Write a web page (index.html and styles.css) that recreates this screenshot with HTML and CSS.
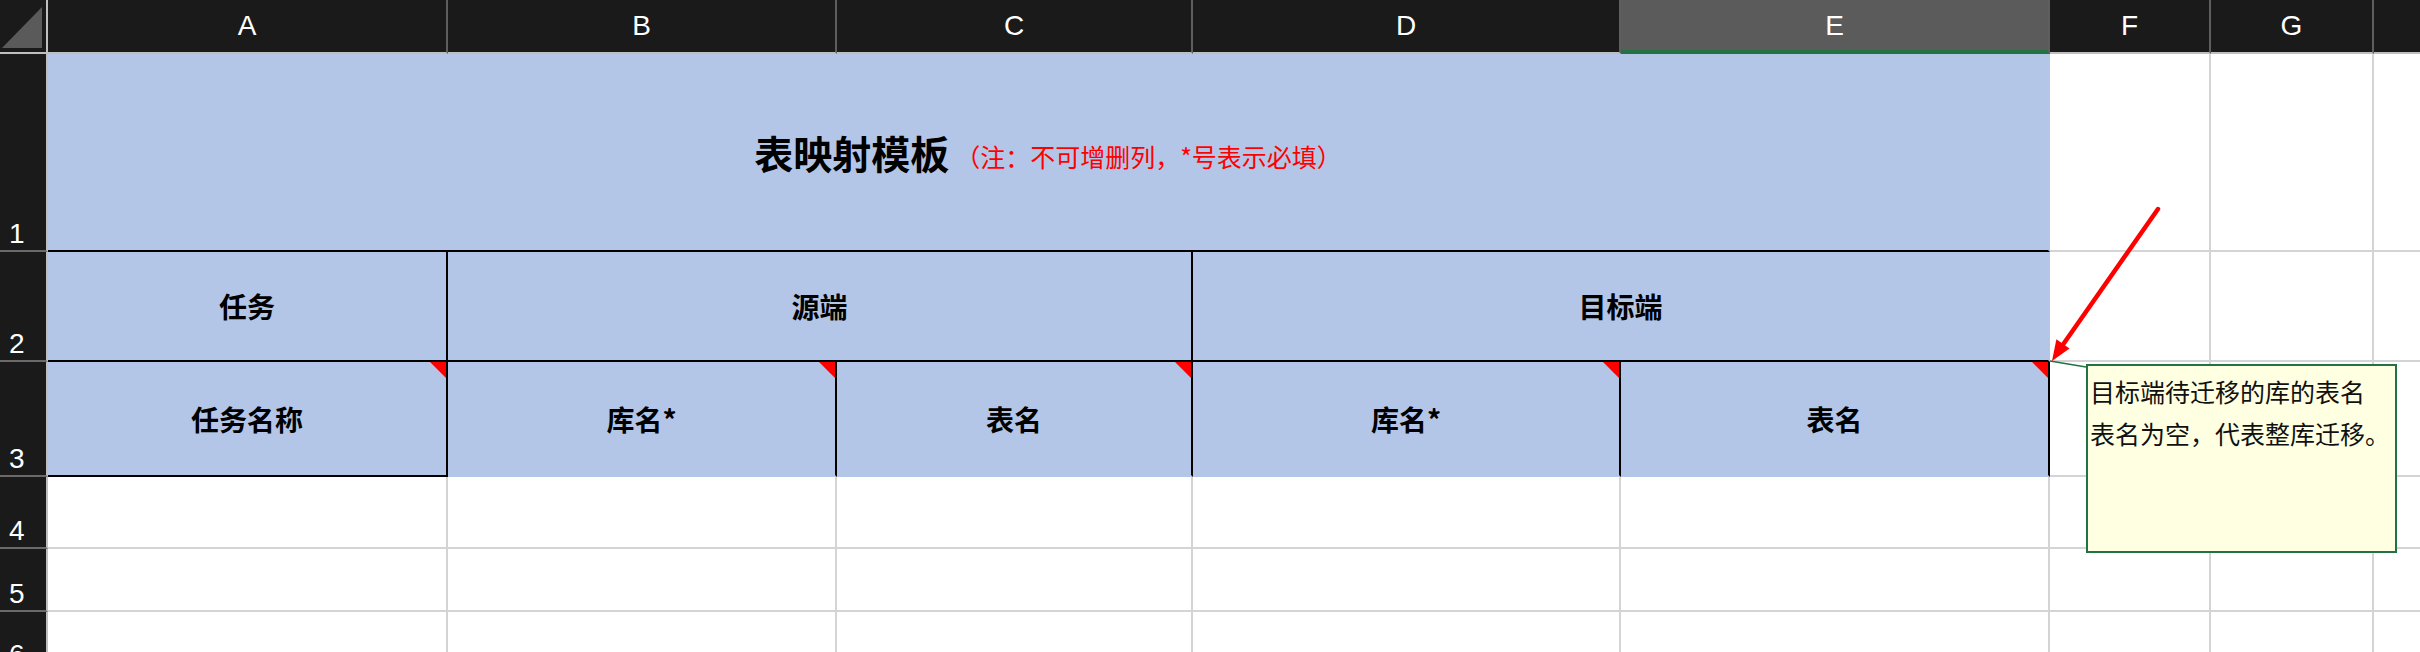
FILE: index.html
```html
<!DOCTYPE html>
<html lang="zh-CN">
<head>
<meta charset="utf-8">
<title>表映射模板</title>
<link rel="stylesheet" href="styles.css">
</head>
<body>
<div class="sheet">
  <div class="grid">
    <div class="corner"><svg class="corner-svg" width="46" height="52" viewBox="0 0 46 52"><polygon points="2,48 42,7 42,48" fill="#5a5a5a"/></svg></div>
    <div class="colh">A</div>
    <div class="colh">B</div>
    <div class="colh">C</div>
    <div class="colh">D</div>
    <div class="colh sel">E</div>
    <div class="colh">F</div>
    <div class="colh">G</div>
    <div class="colh"></div>

    <div class="rowh">1</div>
    <div class="cell blue span5 bb-black br-blue title-cell"><span class="title">表映射模板</span><span class="note">（注：不可增删列，*号表示必填）</span></div>
    <div class="cell"></div>
    <div class="cell"></div>
    <div class="cell"></div>

    <div class="rowh">2</div>
    <div class="cell blue bb-black br-black lbl">任务</div>
    <div class="cell blue span2 bb-black br-black lbl">源端</div>
    <div class="cell blue span2 bb-black br-blue lbl">目标端</div>
    <div class="cell"></div>
    <div class="cell"></div>
    <div class="cell"></div>

    <div class="rowh">3</div>
    <div class="cell blue bb-black br-black lbl flag">任务名称</div>
    <div class="cell blue bb-blue br-black lbl flag">库名*</div>
    <div class="cell blue bb-blue br-black lbl flag">表名</div>
    <div class="cell blue bb-blue br-black lbl flag">库名*</div>
    <div class="cell blue bb-blue br-black lbl flag">表名</div>
    <div class="cell"></div>
    <div class="cell"></div>
    <div class="cell"></div>

    <div class="rowh">4</div>
    <div class="cell"></div><div class="cell"></div><div class="cell"></div><div class="cell"></div>
    <div class="cell"></div><div class="cell"></div><div class="cell"></div><div class="cell"></div>

    <div class="rowh">5</div>
    <div class="cell"></div><div class="cell"></div><div class="cell"></div><div class="cell"></div>
    <div class="cell"></div><div class="cell"></div><div class="cell"></div><div class="cell"></div>

    <div class="rowh">6</div>
    <div class="cell"></div><div class="cell"></div><div class="cell"></div><div class="cell"></div>
    <div class="cell"></div><div class="cell"></div><div class="cell"></div><div class="cell"></div>
  </div>

  <svg class="overlay" width="2420" height="652" viewBox="0 0 2420 652">
    <line x1="2050" y1="361" x2="2086" y2="367" stroke="#217346" stroke-width="1.5"/>
    <line x1="2158" y1="209" x2="2062" y2="346" stroke="#ff0000" stroke-width="4.5" stroke-linecap="round"/>
    <polygon points="2052,361 2069.5,348.4 2056.4,339.2" fill="#ff0000"/>
  </svg>

  <div class="comment">
    <div class="comment-line">目标端待迁移的库的表名</div>
    <div class="comment-line">表名为空，代表整库迁移。</div>
  </div>
</div>
</body>
</html>
```

FILE: styles.css
```css
html, body {
  margin: 0;
  padding: 0;
  background: #ffffff;
}

body {
  overflow: hidden;
}

.sheet {
  position: relative;
  width: 2420px;
  height: 652px;
  overflow: hidden;
  font-family: "Noto Sans CJK SC", "Noto Sans", sans-serif;
}

.grid {
  display: grid;
  grid-template-columns: 48px 400px 389px 356px 428px 429px 161px 163px 200px;
  grid-template-rows: 54px 198px 110px 115px 72px 63px 61px;
}

.grid > div {
  box-sizing: border-box;
  min-width: 0;
}

/* header row / corner */
.corner {
  background: #1a1a1a;
  border-right: 2px solid #bfbfbf;
  border-bottom: 2px solid #bfbfbf;
  display: flex;
}

.corner-svg {
  display: block;
}

.colh {
  background: #1a1a1a;
  color: #ffffff;
  border-right: 2px solid #5e5e5e;
  border-bottom: 2px solid #bfbfbf;
  font-family: "Liberation Sans", Arial, sans-serif;
  font-size: 28px;
  line-height: 52px;
  text-align: center;
}

.colh.sel {
  background: #5b5b5b;
  border-bottom-color: #217346;
  box-shadow: inset 0 -2px 0 #217346;
}

.rowh {
  background: #1a1a1a;
  color: #ffffff;
  border-right: 2px solid #bfbfbf;
  border-bottom: 2px solid #6a6a6a;
  font-family: "Liberation Sans", Arial, sans-serif;
  font-size: 28px;
  line-height: 28px;
  display: flex;
  align-items: flex-end;
  padding: 0 0 2px 9px;
}

/* body cells */
.cell {
  background: #ffffff;
  border-right: 2px solid #d4d4d4;
  border-bottom: 2px solid #d4d4d4;
  position: relative;
}

.blue {
  background: #b4c6e7;
}

.span5 {
  grid-column: span 5;
}

.span2 {
  grid-column: span 2;
}

.bb-black {
  border-bottom-color: #000000;
}

.bb-blue {
  border-bottom-color: #b4c6e7;
}

.br-black {
  border-right-color: #000000;
}

.br-blue {
  border-right-color: #b4c6e7;
}

.title-cell {
  display: flex;
  align-items: center;
  justify-content: center;
  white-space: nowrap;
}

.title {
  font-size: 39px;
  font-weight: 700;
  color: #000000;
  line-height: 1.2;
}

.note {
  font-size: 25px;
  color: #ff0000;
  margin-left: 6px;
  line-height: 1.2;
  padding-top: 8px;
}

.lbl {
  display: flex;
  align-items: center;
  justify-content: center;
  font-size: 28px;
  font-weight: 700;
  color: #000000;
  white-space: nowrap;
}

.flag::after {
  content: "";
  position: absolute;
  top: 0;
  right: 0;
  width: 16px;
  height: 16px;
  background: #ff0000;
  clip-path: polygon(0 0, 100% 0, 100% 100%);
}

/* overlays */
.overlay {
  position: absolute;
  left: 0;
  top: 0;
  pointer-events: none;
}

.comment {
  position: absolute;
  left: 2086px;
  top: 364px;
  width: 311px;
  height: 189px;
  box-sizing: border-box;
  border: 2px solid #217346;
  background: #ffffe1;
  padding: 4px 0 0 2px;
  color: #111111;
  font-size: 25px;
  line-height: 42px;
}

.comment-line {
  white-space: nowrap;
}
```
